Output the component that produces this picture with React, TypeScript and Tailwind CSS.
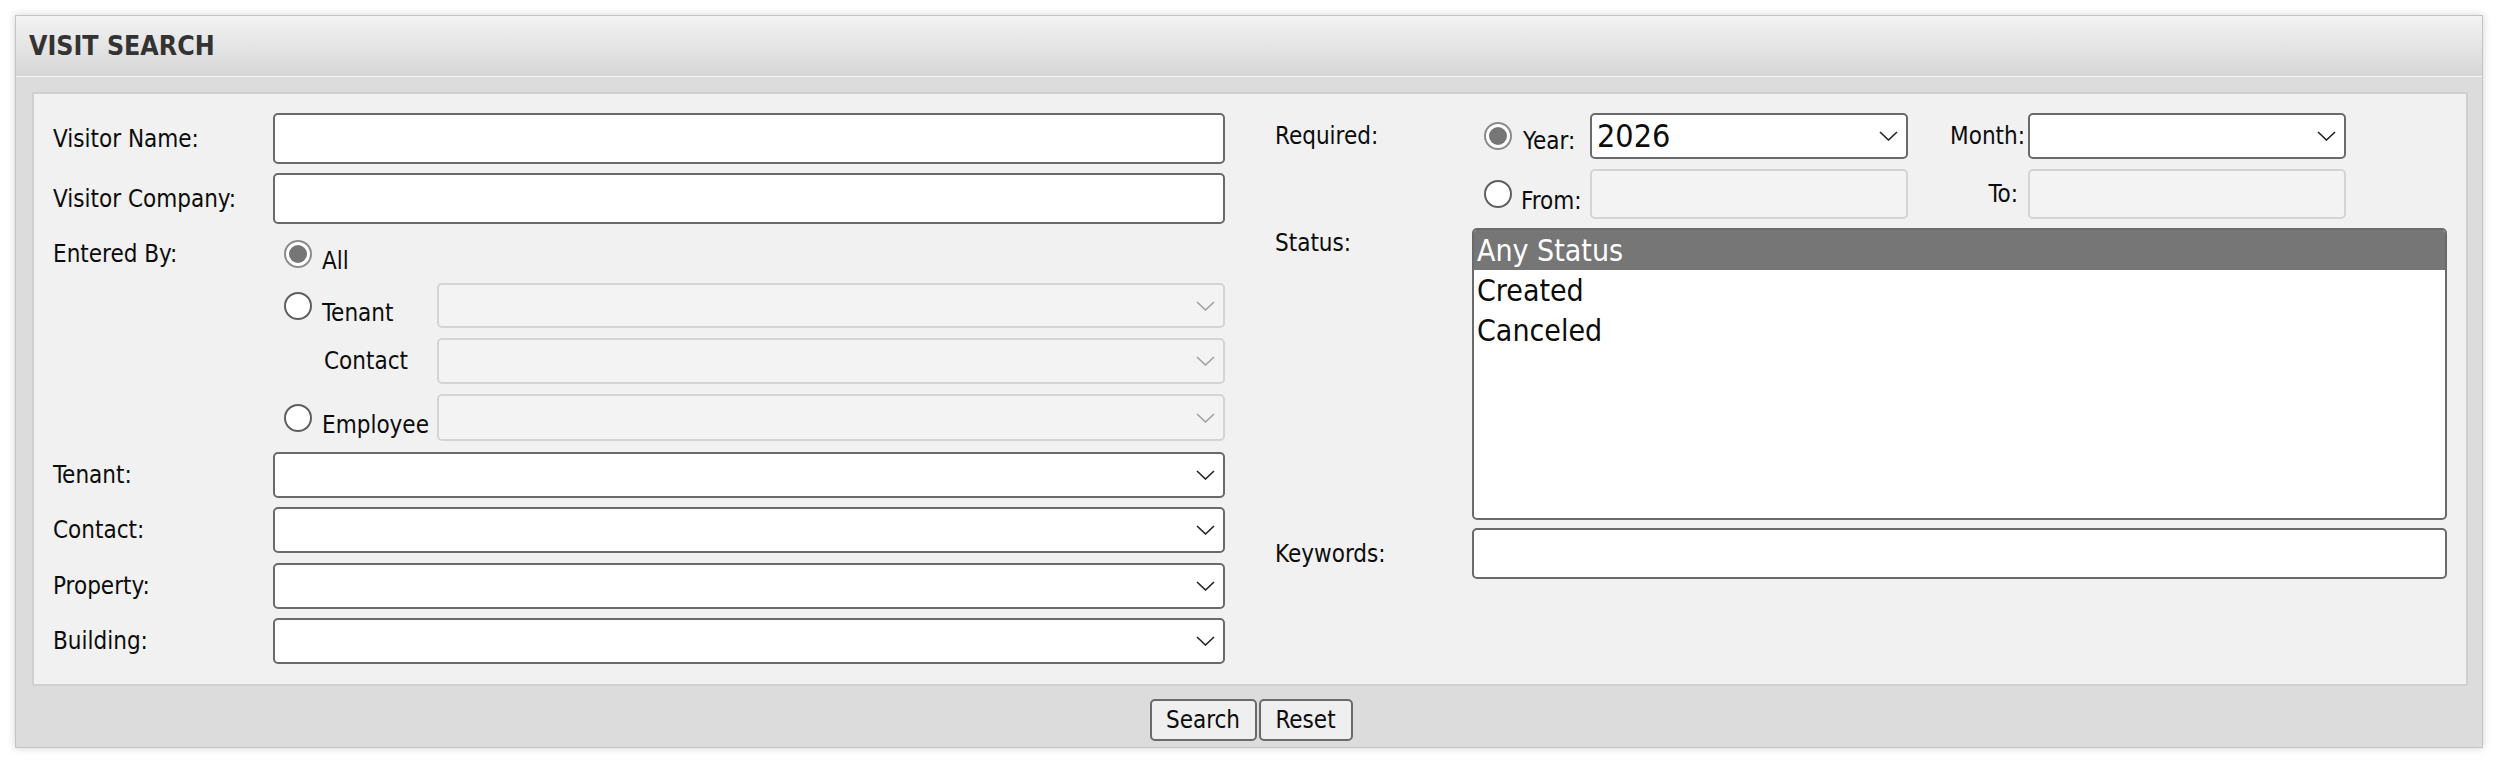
import React from "react";

const label = "shrink-0";

function Chevron({ disabled }: { disabled?: boolean }) {
  return (
    <svg
      className="pointer-events-none absolute right-[10px] top-1/2 -translate-y-1/2"
      width="19"
      height="10"
      viewBox="0 0 19 10"
      fill="none"
    >
      <path
        d="M1 1l8.5 8 8.5-8"
        className={disabled ? "stroke-[#a0a0a0]" : "stroke-[#222222]"}
        strokeWidth="1.6"
      />
    </svg>
  );
}

function Select({
  className,
  disabled,
  value,
}: {
  className?: string;
  disabled?: boolean;
  value?: string;
}) {
  return (
    <div className={"relative " + (className ?? "")}>
      <div
        className={
          disabled
            ? "h-full w-full rounded-[5px] border-2 border-[#d4d4d4] bg-[#f3f3f3]"
            : "flex h-full w-full items-center rounded-[5px] border-2 border-[#6a6a6a] bg-white pl-[5px] text-[32px]"
        }
      >
        {value}
      </div>
      <Chevron disabled={disabled} />
    </div>
  );
}

function TextBox({ className, disabled }: { className?: string; disabled?: boolean }) {
  return (
    <div
      className={
        (disabled
          ? "rounded-[5px] border-2 border-[#d4d4d4] bg-[#f3f3f3] "
          : "rounded-[5px] border-2 border-[#6a6a6a] bg-white ") + (className ?? "")
      }
    />
  );
}

function Radio({ checked }: { checked?: boolean }) {
  if (checked) {
    return (
      <span className="flex h-[28px] w-[28px] shrink-0 items-center justify-center rounded-full border-2 border-[#8c8c8c] bg-white">
        <span className="h-[18px] w-[18px] rounded-full bg-[#767676]" />
      </span>
    );
  }
  return <span className="h-[28px] w-[28px] shrink-0 rounded-full border-2 border-[#5f5f5f] bg-white" />;
}

export default function App() {
  return (
    <div className="min-h-[762px] bg-white pl-[15px] pr-[17px] pt-[15px] font-['DejaVu_Sans_Condensed','DejaVu_Sans',sans-serif] text-[24px] text-[#0c0c0c]">
      <div className="border border-[#c4c4c4] shadow-[0_0_8px_rgba(0,0,0,0.18)]">
        <div className="flex h-[61px] items-center border-b border-[#f4f4f4] bg-gradient-to-b from-[#f3f3f3] to-[#d6d6d6] pl-[13px] text-[26.5px] font-bold text-[#333]">
          VISIT SEARCH
        </div>

        <div className="bg-[#dcdcdc] pb-[6px] pl-[16px] pr-[14px] pt-[15px]">
          <div className="flex h-[594px] gap-[50px] border-2 border-[#d0d0d0] bg-[#f1f1f1] px-[19px] pt-[19px]">
            {/* left side */}
            <div className="w-[1172px] shrink-0">
              <div className="flex h-[51px] items-center">
                <div className={label + " w-[220px]"}>Visitor Name:</div>
                <TextBox className="h-full flex-1" />
              </div>
              <div className="mt-[9px] flex h-[51px] items-center">
                <div className={label + " w-[220px]"}>Visitor Company:</div>
                <TextBox className="h-full flex-1" />
              </div>

              <div className="mt-[9px] flex">
                <div className="flex h-[42px] w-[220px] shrink-0 items-center">Entered By:</div>
                <div className="flex-1">
                  <div className="flex h-[42px] items-center pl-[11px]">
                    <Radio checked />
                    <span className="ml-[10px] mt-[14px]">All</span>
                  </div>
                  <div className="mt-[8px] flex h-[45px] items-center">
                    <div className="flex w-[164px] shrink-0 items-center pl-[11px]">
                      <Radio />
                      <span className="ml-[10px] mt-[14px]">Tenant</span>
                    </div>
                    <Select disabled className="h-full flex-1" />
                  </div>
                  <div className="mt-[10px] flex h-[46px] items-center">
                    <div className="w-[164px] shrink-0 pl-[51px]">Contact</div>
                    <Select disabled className="h-full flex-1" />
                  </div>
                  <div className="mt-[10px] flex h-[47px] items-center">
                    <div className="flex w-[164px] shrink-0 items-center pl-[11px]">
                      <Radio />
                      <span className="ml-[10px] mt-[14px]">Employee</span>
                    </div>
                    <Select disabled className="h-full flex-1" />
                  </div>
                </div>
              </div>

              <div className="mt-[11px] flex h-[46px] items-center">
                <div className={label + " w-[220px]"}>Tenant:</div>
                <Select className="h-full flex-1" />
              </div>
              <div className="mt-[9px] flex h-[46px] items-center">
                <div className={label + " w-[220px]"}>Contact:</div>
                <Select className="h-full flex-1" />
              </div>
              <div className="mt-[10px] flex h-[46px] items-center">
                <div className={label + " w-[220px]"}>Property:</div>
                <Select className="h-full flex-1" />
              </div>
              <div className="mt-[9px] flex h-[46px] items-center">
                <div className={label + " w-[220px]"}>Building:</div>
                <Select className="h-full flex-1" />
              </div>
            </div>

            {/* right side */}
            <div className="flex-1">
              <div className="flex h-[46px] items-center">
                <div className={label + " w-[197px]"}>Required:</div>
                <div className="flex w-[118px] shrink-0 items-center pl-[12px]">
                  <Radio checked />
                  <span className="ml-[11px] mt-[10px]">Year:</span>
                </div>
                <Select className="h-full w-[318px] shrink-0" value="2026" />
                <div className="w-[120px] shrink-0 pr-[3px] text-right">Month:</div>
                <Select className="h-full w-[318px] shrink-0" />
              </div>
              <div className="mt-[10px] flex h-[50px] items-center">
                <div className="w-[197px] shrink-0" />
                <div className="flex w-[118px] shrink-0 items-center pl-[12px]">
                  <Radio />
                  <span className="ml-[9px] mt-[14px]">From:</span>
                </div>
                <TextBox disabled className="h-full w-[318px] shrink-0" />
                <div className="w-[120px] shrink-0 pr-[10px] text-right">To:</div>
                <TextBox disabled className="h-full w-[318px] shrink-0" />
              </div>

              <div className="mt-[9px] flex">
                <div className="w-[197px] shrink-0 leading-[30px]">Status:</div>
                <div className="h-[292px] flex-1 overflow-hidden rounded-[5px] border-2 border-[#6a6a6a] bg-white text-[30px]">
                  <div className="flex h-[40px] items-center bg-[#767676] pl-[3px] text-white">Any Status</div>
                  <div className="flex h-[40px] items-center pl-[3px]">Created</div>
                  <div className="flex h-[40px] items-center pl-[3px]">Canceled</div>
                </div>
              </div>

              <div className="mt-[8px] flex h-[51px] items-center">
                <div className={label + " w-[197px]"}>Keywords:</div>
                <TextBox className="h-full flex-1" />
              </div>
            </div>
          </div>

          <div className="mt-[13px] flex justify-center gap-[2px] pl-[2px]">
            <button className="h-[42px] w-[107px] rounded-[5px] border-2 border-[#6a6a6a] bg-[#efefef] text-[24px]">
              Search
            </button>
            <button className="h-[42px] w-[94px] rounded-[5px] border-2 border-[#6a6a6a] bg-[#efefef] text-[24px]">
              Reset
            </button>
          </div>
        </div>
      </div>
    </div>
  );
}
